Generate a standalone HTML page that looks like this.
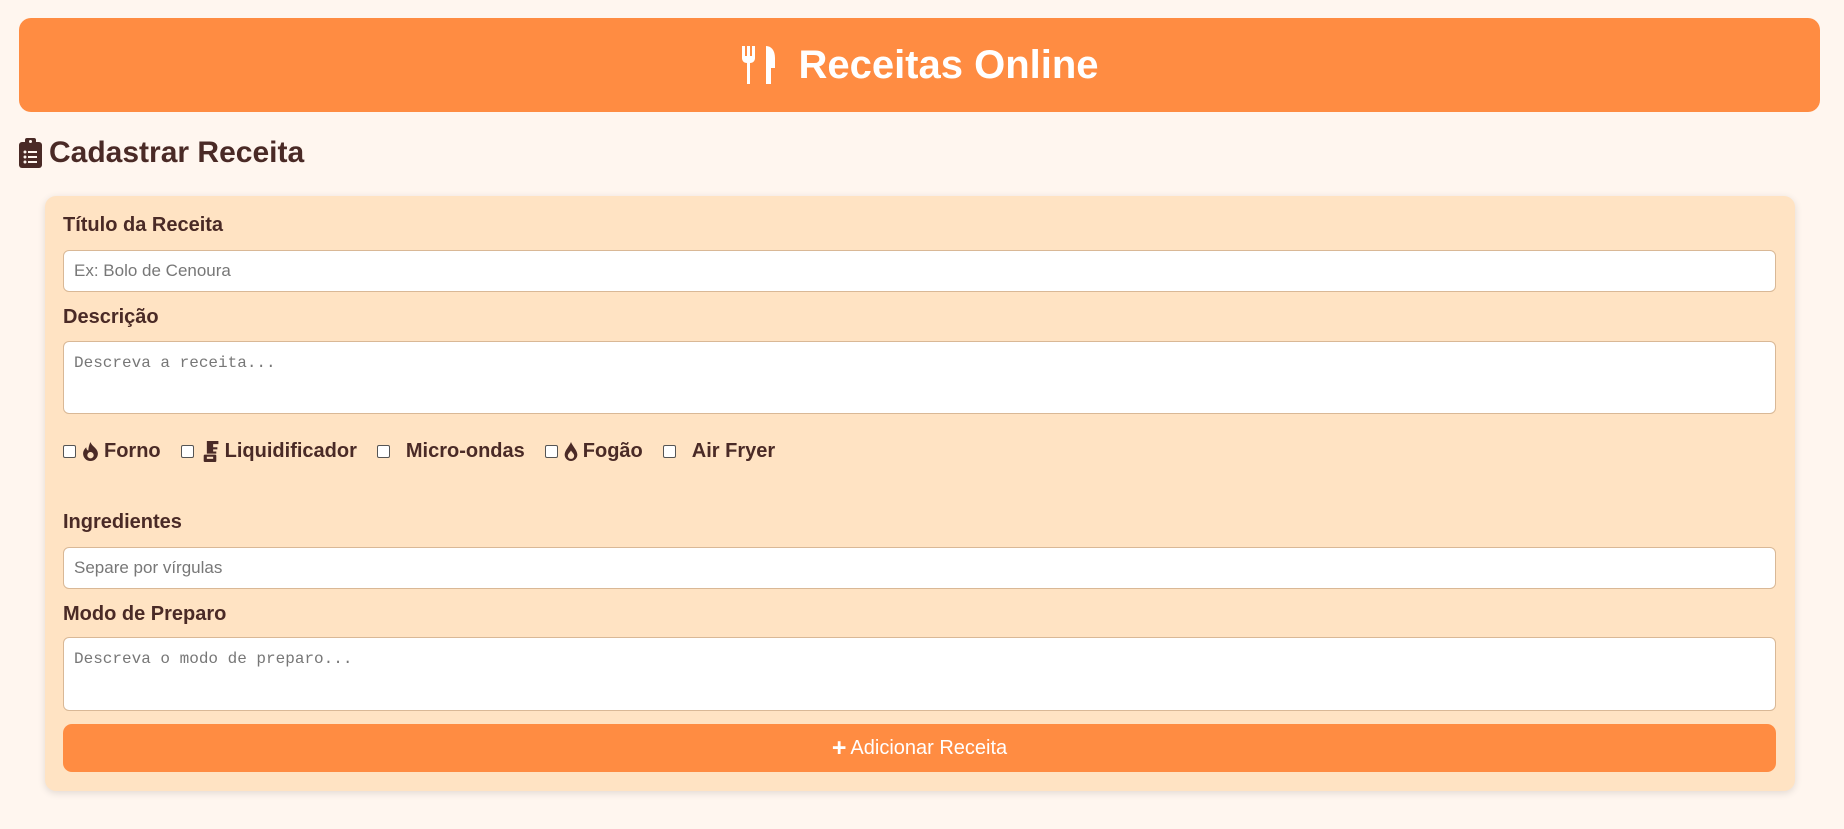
<!DOCTYPE html>
<html><head><meta charset="utf-8"><style>
*{box-sizing:border-box;margin:0;padding:0}
body{width:1844px;height:829px;background:#fff6ef;font-family:"Liberation Sans",sans-serif;color:#4a2a26;position:relative;overflow:hidden}
.hdr{position:absolute;left:19px;top:18px;width:1801px;height:94px;background:#ff8c42;border-radius:12px;color:#fff;font-weight:bold;font-size:40px;display:flex;align-items:center;justify-content:center}
.hdr svg{margin-right:20px}
h2{position:absolute;left:19px;top:136px;font-size:30px;font-weight:bold;display:flex;align-items:center}
h2 svg{margin-right:7px}
.card{position:absolute;left:45px;top:196px;width:1750px;height:595px;background:#ffe3c3;border-radius:11px;box-shadow:0 2px 8px rgba(0,0,0,0.12)}
.lbl{position:absolute;left:18px;font-size:20px;font-weight:bold}
.in{position:absolute;left:18px;width:1713px;background:#fff;border:1px solid #d9b896;border-radius:6px;font-size:17px;color:#777;padding:0 10px;display:flex;align-items:center}
.ta{align-items:flex-start;padding-top:12px;font-family:"Liberation Mono",monospace;font-size:16px}
.row{position:absolute;left:18px;top:244px;font-size:20px;font-weight:bold;display:flex;align-items:center}
.cb{width:13px;height:13px;border:1.5px solid #555;background:#fff;border-radius:2px;margin-right:6px;display:inline-block}
.it{display:flex;align-items:center;margin-right:20px}
.it svg{margin-right:5px}
.btn{position:absolute;left:18px;top:528px;width:1713px;height:48px;background:#ff8c42;border-radius:9px;color:#fff;font-size:20px;display:flex;align-items:center;justify-content:center}
</style></head><body>
<div class="hdr"><svg width="38" height="42" viewBox="0 0 38 42"><path d="M2 2h3v10h2V2h3v10h2V2h3v12c0 3-2 5-5 5v21H7V19c-3 0-5-2-5-5z" fill="#fff"/><path d="M26 2c5 0 9 4 9 12v10h-4v16h-5z" fill="#fff"/></svg>Receitas Online</div>
<h2><svg width="23" height="30" viewBox="0 0 23 30"><rect x="0" y="4" width="23" height="26" rx="3" fill="#4a2a26"/><rect x="6" y="0" width="11" height="7" rx="2" fill="#4a2a26"/><circle cx="11.5" cy="3.5" r="1.5" fill="#fff6ef"/><g fill="#fff6ef"><circle cx="6" cy="14" r="1.5"/><circle cx="6" cy="19" r="1.5"/><circle cx="6" cy="24" r="1.5"/><rect x="9" y="13" width="9" height="2"/><rect x="9" y="18" width="9" height="2"/><rect x="9" y="23" width="9" height="2"/></g></svg>Cadastrar Receita</h2>
<div class="card">
<div class="lbl" style="top:18px">Título da Receita</div>
<div class="in" style="top:54px;height:42px">Ex: Bolo de Cenoura</div>
<div class="lbl" style="top:110px">Descrição</div>
<div class="in ta" style="top:145px;height:73px">Descreva a receita...</div>
<div class="row">
<span class="it"><span class="cb"></span><svg width="17" height="19" viewBox="0 0 16 18"><path d="M8 0c1 4 7 6 7 11a7 7 0 0 1-14 0c0-3 2-5 3-6 0 2 1 3 2 3 0-3 1-6 2-8z" fill="#4a2a26"/><circle cx="8" cy="12.5" r="3" fill="#ffe3c3"/></svg>Forno</span>
<span class="it"><span class="cb"></span><svg width="20" height="21" viewBox="0 0 18 20"><path d="M1 0h16v3h-5v3h4v2h-4v2h3v2H6V0z" fill="#4a2a26"/><rect x="3" y="13" width="12" height="7" rx="1" fill="#4a2a26"/><rect x="6" y="15" width="6" height="2" fill="#ffe3c3"/></svg>Liquidificador</span>
<span class="it"><span class="cb"></span><span style="width:10px"></span>Micro-ondas</span>
<span class="it"><span class="cb"></span><svg width="14" height="19" viewBox="0 0 13 18"><path d="M6.5 0C8 4 12.5 8 12.5 12a6 6 0 0 1-12 0C.5 8 5 4 6.5 0z" fill="#4a2a26"/><path d="M6.5 8c1 2 3 3 3 5a3 3 0 0 1-6 0c0-2 2-3 3-5z" fill="#ffe3c3"/></svg>Fogão</span>
<span class="it"><span class="cb"></span><span style="width:10px"></span>Air Fryer</span>
</div>
<div class="lbl" style="top:315px">Ingredientes</div>
<div class="in" style="top:351px;height:42px">Separe por vírgulas</div>
<div class="lbl" style="top:407px">Modo de Preparo</div>
<div class="in ta" style="top:441px;height:74px">Descreva o modo de preparo...</div>
<div class="btn"><span style="font-size:25px;font-weight:bold;margin-right:4px;line-height:1">+</span>Adicionar Receita</div>
</div>
</body></html>
